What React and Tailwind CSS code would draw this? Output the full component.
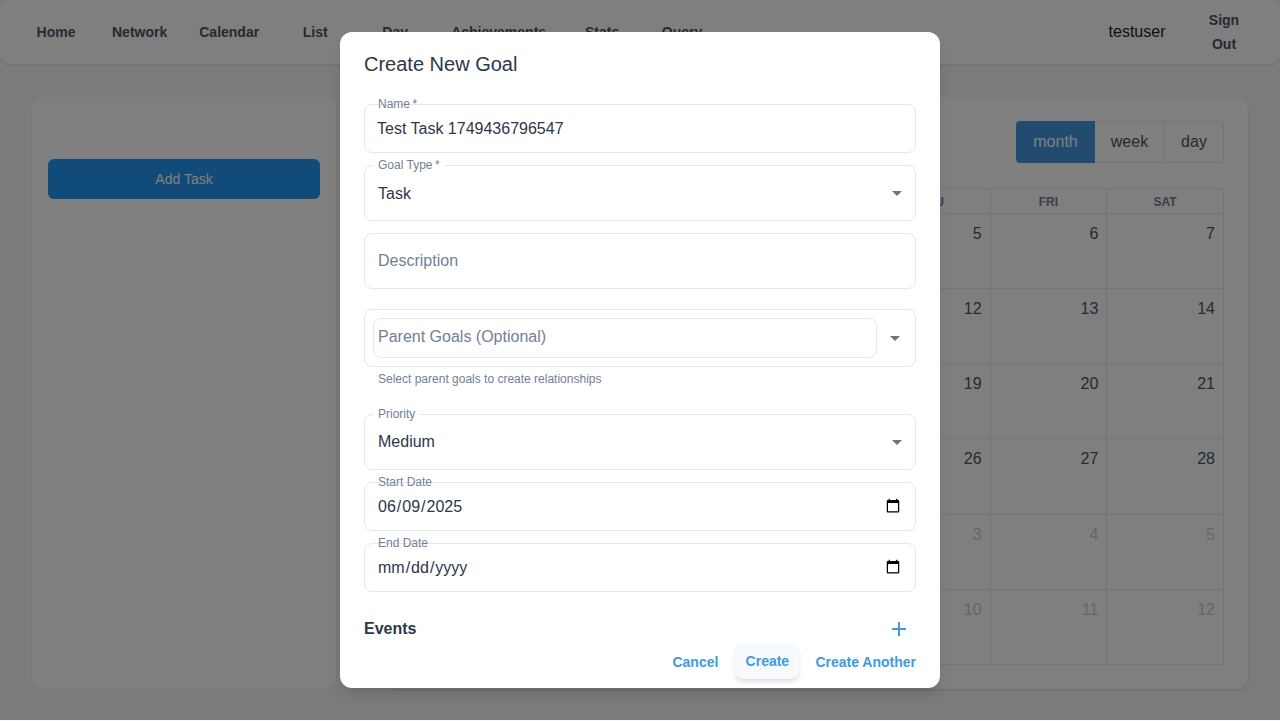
import React from "react";

const NAV = ["Home", "Network", "Calendar", "List", "Day", "Achievements", "Stats", "Query"];
const DAYS = ["SUN", "MON", "TUE", "WED", "THU", "FRI", "SAT"];
const WEEKS = [
  [1, 2, 3, 4, 5, 6, 7],
  [8, 9, 10, 11, 12, 13, 14],
  [15, 16, 17, 18, 19, 20, 21],
  [22, 23, 24, 25, 26, 27, 28],
  [29, 30, 1, 2, 3, 4, 5],
  [6, 7, 8, 9, 10, 11, 12],
];

function NavBar() {
  return (
    <nav className="flex h-[65px] items-center gap-4 rounded-xl border-b border-[#e2e8f0] bg-white px-6 shadow-xs">
      {NAV.map((item) => (
        <button key={item} className="h-9 min-w-16 px-2 text-sm font-bold text-[#4a5568]">
          {item}
        </button>
      ))}
      <div className="ml-auto flex items-center">
        <span className="mr-[26.5px] text-base text-[#1a202c]">testuser</span>
        <button className="w-16 px-2 text-sm leading-6 font-bold text-[#4a5568]">Sign Out</button>
      </div>
    </nav>
  );
}

function MonthGrid() {
  return (
    <div className="-ml-[3px] flex flex-1 flex-col border border-[#e2e8f0]">
      <div className="grid h-6 grid-cols-7">
        {DAYS.map((d, i) => (
          <div
            key={d}
            className={`pt-[5px] text-center text-xs font-bold text-[#718096] ${i ? "border-l border-[#e2e8f0]" : ""}`}
          >
            {d}
          </div>
        ))}
      </div>
      <div className="grid flex-1 grid-rows-6">
        {WEEKS.map((week, w) => (
          <div key={w} className="grid grid-cols-7 border-t border-[#e2e8f0]">
            {week.map((n, i) => {
              const off = w === 5 || (w === 4 && i > 1);
              return (
                <div
                  key={i}
                  className={`pt-2 pr-2 text-right text-base ${off ? "text-[#c8ccd2]" : "text-[#4a5568]"} ${
                    i ? "border-l border-[#e2e8f0]" : ""
                  }`}
                >
                  {n}
                </div>
              );
            })}
          </div>
        ))}
      </div>
    </div>
  );
}

function Page() {
  return (
    <div className="h-[720px] bg-[#f4f6f9]">
      <NavBar />
      <main className="flex gap-12 px-8 pt-8">
        <aside className="h-[592px] w-[304px] rounded-xl bg-white px-4 pt-[62px] shadow-xs">
          <button className="h-10 w-full rounded-md bg-[#2196f3] text-sm text-white">Add Task</button>
        </aside>
        <section className="flex h-[592px] flex-1 flex-col rounded-xl bg-white p-6 shadow-sm">
          <div className="mb-[25px] flex h-[42px] justify-end text-base text-[#4a5568]">
            <button className="w-[79px] rounded-l bg-[#4299e1] text-white">month</button>
            <button className="w-[70px] border-y border-r border-[#e2e8f0]">week</button>
            <button className="w-[59px] rounded-r border-y border-r border-[#e2e8f0]">day</button>
          </div>
          <MonthGrid />
        </section>
      </main>
    </div>
  );
}

function Label({ children, notched }) {
  return (
    <span
      className={`absolute -top-[9px] left-2 px-[5px] text-xs leading-4 whitespace-pre text-[#718096] ${
        notched ? "bg-white" : ""
      }`}
    >
      {children}
    </span>
  );
}

function Arrow() {
  return (
    <svg viewBox="0 0 24 24" className="size-6 shrink-0 fill-[#757575]">
      <path d="M7 10l5 5 5-5z" />
    </svg>
  );
}

function SelectField({ label, value, className, valueClass = "" }) {
  return (
    <div
      className={`relative flex h-14 shrink-0 items-center justify-between rounded-lg border border-[#e2e8f0] pr-1.5 pl-[13px] ${className}`}
    >
      <Label notched>{label}</Label>
      <span className={valueClass}>{value}</span>
      <Arrow />
    </div>
  );
}

function DateField({ label, value }) {
  return (
    <div className="relative mt-3 h-[49px] shrink-0">
      <input
        type="date"
        defaultValue={value}
        className="h-full w-full rounded-lg border border-[#e2e8f0] bg-white px-3 text-base text-[#2d3748] [&::-webkit-calendar-picker-indicator]:-translate-y-px"
      />
      <span className="absolute -top-2 left-3.5 text-xs leading-4 text-[#718096]">{label}</span>
    </div>
  );
}

function GoalDialog() {
  return (
    <div className="flex h-[656px] w-[600px] flex-col rounded-xl bg-white px-6 text-base text-[#2d3748] shadow-lg">
      <h2 className="h-[72px] shrink-0 pt-4 text-xl leading-8">Create New Goal</h2>
      <div className="relative h-[49px] shrink-0">
        <input
          type="text"
          defaultValue="Test Task 1749436796547"
          className="h-full w-full rounded-lg border border-[#e2e8f0] px-3 text-base"
        />
        <span className="absolute -top-2 left-3.5 text-xs leading-4 whitespace-pre text-[#718096]">
          {"Name\u2009*"}
        </span>
      </div>
      <SelectField label={"Goal Type\u2009*"} value="Task" className="mt-3" valueClass="pt-0.5" />
      <div className="mt-3 flex h-14 shrink-0 items-center rounded-lg border border-[#e2e8f0] px-[13px] text-[#718096]">
        Description
      </div>
      <div className="mt-5 flex h-[58px] shrink-0 items-center justify-between rounded-lg border border-[#e2e8f0] px-2">
        <div className="flex h-10 w-[504px] items-center rounded-lg border border-[#e2e8f0] pb-[3px] pl-1 text-[#718096]">
          Parent Goals (Optional)
        </div>
        <Arrow />
      </div>
      <p className="mt-1 pl-3.5 text-xs leading-4 text-[#718096]">Select parent goals to create relationships</p>
      <SelectField label="Priority" value="Medium" className="mt-[27px]" />
      <DateField label="Start Date" value="2025-06-09" />
      <DateField label="End Date" />
      <div className="mt-[25px] flex h-6 shrink-0 items-center justify-between pr-[5px]">
        <h3 className="font-bold">Events</h3>
        <svg viewBox="0 0 24 24" className="size-6 fill-[#4299e1]">
          <path d="M19 13h-6v6h-2v-6H5v-2h6V5h2v6h6z" />
        </svg>
      </div>
      <div className="mt-0.5 flex h-9 items-center justify-end text-sm font-bold text-[#4299e1]">
        <button className="mr-[17px] pt-0.5">Cancel</button>
        <button className="mr-4 h-9 w-16 rounded-lg bg-[#f6fafe] shadow-md">Create</button>
        <button className="pt-0.5">Create Another</button>
      </div>
    </div>
  );
}

export default function App() {
  return (
    <div className="relative h-[721px] overflow-hidden bg-[#f7fafc] font-['Liberation_Sans',Arial,sans-serif]">
      <Page />
      <div className="absolute inset-x-0 top-0 flex h-[720px] items-center justify-center bg-black/50">
        <GoalDialog />
      </div>
    </div>
  );
}
